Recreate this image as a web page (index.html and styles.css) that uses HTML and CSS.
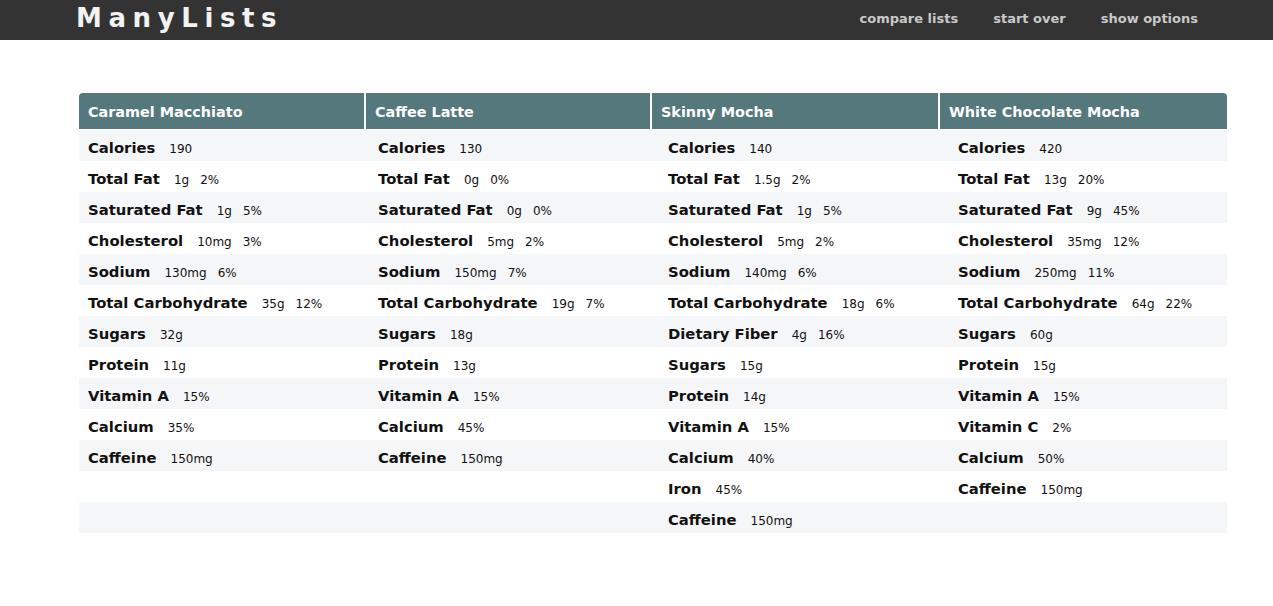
FILE: index.html
```html
<!DOCTYPE html>
<html>
<head>
<meta charset="utf-8">
<title>ManyLists</title>
<link rel="stylesheet" href="styles.css">
</head>
<body>
<header class="navbar">
  <div class="brand">ManyLists</div>
  <nav class="nav">
    <a href="#">compare lists</a>
    <a href="#">start over</a>
    <a href="#">show options</a>
  </nav>
</header>
<main class="content">
  <div class="table">
    <div class="head">
      <div class="th">Caramel Macchiato</div>
      <div class="th">Caffee Latte</div>
      <div class="th">Skinny Mocha</div>
      <div class="th">White Chocolate Mocha</div>
    </div>
    <div class="row">
      <div class="td"><b>Calories</b><span>190</span></div>
      <div class="td"><b>Calories</b><span>130</span></div>
      <div class="td"><b>Calories</b><span>140</span></div>
      <div class="td"><b>Calories</b><span>420</span></div>
    </div>
    <div class="row">
      <div class="td"><b>Total Fat</b><span>1g</span><span>2%</span></div>
      <div class="td"><b>Total Fat</b><span>0g</span><span>0%</span></div>
      <div class="td"><b>Total Fat</b><span>1.5g</span><span>2%</span></div>
      <div class="td"><b>Total Fat</b><span>13g</span><span>20%</span></div>
    </div>
    <div class="row">
      <div class="td"><b>Saturated Fat</b><span>1g</span><span>5%</span></div>
      <div class="td"><b>Saturated Fat</b><span>0g</span><span>0%</span></div>
      <div class="td"><b>Saturated Fat</b><span>1g</span><span>5%</span></div>
      <div class="td"><b>Saturated Fat</b><span>9g</span><span>45%</span></div>
    </div>
    <div class="row">
      <div class="td"><b>Cholesterol</b><span>10mg</span><span>3%</span></div>
      <div class="td"><b>Cholesterol</b><span>5mg</span><span>2%</span></div>
      <div class="td"><b>Cholesterol</b><span>5mg</span><span>2%</span></div>
      <div class="td"><b>Cholesterol</b><span>35mg</span><span>12%</span></div>
    </div>
    <div class="row">
      <div class="td"><b>Sodium</b><span>130mg</span><span>6%</span></div>
      <div class="td"><b>Sodium</b><span>150mg</span><span>7%</span></div>
      <div class="td"><b>Sodium</b><span>140mg</span><span>6%</span></div>
      <div class="td"><b>Sodium</b><span>250mg</span><span>11%</span></div>
    </div>
    <div class="row">
      <div class="td"><b>Total Carbohydrate</b><span>35g</span><span>12%</span></div>
      <div class="td"><b>Total Carbohydrate</b><span>19g</span><span>7%</span></div>
      <div class="td"><b>Total Carbohydrate</b><span>18g</span><span>6%</span></div>
      <div class="td"><b>Total Carbohydrate</b><span>64g</span><span>22%</span></div>
    </div>
    <div class="row">
      <div class="td"><b>Sugars</b><span>32g</span></div>
      <div class="td"><b>Sugars</b><span>18g</span></div>
      <div class="td"><b>Dietary Fiber</b><span>4g</span><span>16%</span></div>
      <div class="td"><b>Sugars</b><span>60g</span></div>
    </div>
    <div class="row">
      <div class="td"><b>Protein</b><span>11g</span></div>
      <div class="td"><b>Protein</b><span>13g</span></div>
      <div class="td"><b>Sugars</b><span>15g</span></div>
      <div class="td"><b>Protein</b><span>15g</span></div>
    </div>
    <div class="row">
      <div class="td"><b>Vitamin A</b><span>15%</span></div>
      <div class="td"><b>Vitamin A</b><span>15%</span></div>
      <div class="td"><b>Protein</b><span>14g</span></div>
      <div class="td"><b>Vitamin A</b><span>15%</span></div>
    </div>
    <div class="row">
      <div class="td"><b>Calcium</b><span>35%</span></div>
      <div class="td"><b>Calcium</b><span>45%</span></div>
      <div class="td"><b>Vitamin A</b><span>15%</span></div>
      <div class="td"><b>Vitamin C</b><span>2%</span></div>
    </div>
    <div class="row">
      <div class="td"><b>Caffeine</b><span>150mg</span></div>
      <div class="td"><b>Caffeine</b><span>150mg</span></div>
      <div class="td"><b>Calcium</b><span>40%</span></div>
      <div class="td"><b>Calcium</b><span>50%</span></div>
    </div>
    <div class="row">
      <div class="td"></div>
      <div class="td"></div>
      <div class="td"><b>Iron</b><span>45%</span></div>
      <div class="td"><b>Caffeine</b><span>150mg</span></div>
    </div>
    <div class="row">
      <div class="td"></div>
      <div class="td"></div>
      <div class="td"><b>Caffeine</b><span>150mg</span></div>
      <div class="td"></div>
    </div>
  </div>
</main>
</body>
</html>
```

FILE: styles.css
```css
* { box-sizing: border-box; }
html, body { margin: 0; padding: 0; background: #fff; }
body { font-family: "DejaVu Sans", "Liberation Sans", sans-serif; color: #111; }

.navbar {
  height: 40px;
  background: #333333;
  display: flex;
  align-items: center;
  justify-content: space-between;
  padding: 0 75px 0 76px;
}
.brand {
  color: #f2f2f2;
  font-size: 26px;
  font-weight: bold;
  letter-spacing: 6.6px;
  line-height: 36px;
  margin-top: -4px;
}
.nav { display: flex; gap: 35px; margin-top: -4px; }
.nav a {
  color: #c8c8c8;
  text-decoration: none;
  font-size: 13px;
  font-weight: bold;
}

.content { padding: 53px 46px 0 79px; }
.table { width: 1148px; }

.head {
  display: grid;
  grid-template-columns: 285px 284px 286px 1fr;
  gap: 2px;
  background: #fff;
  margin-bottom: 1px;
}
.th {
  background: #55787c;
  color: #fff;
  height: 36px;
  line-height: 38px;
  padding-left: 9px;
  font-size: 14.4px;
  font-weight: bold;
}
.th:first-child { border-top-left-radius: 4px; }
.th:last-child { border-top-right-radius: 4px; }

.row {
  display: grid;
  grid-template-columns: 290px 290px 290px 1fr;
  height: 31px;
  align-items: center;
  padding-top: 3px;
}
.row:nth-child(even) { background: #f5f6f8; }
.td { padding-left: 9px; white-space: nowrap; }
.td b { font-size: 14.8px; font-weight: bold; color: #111; }
.td span { font-size: 12px; margin-left: 11px; color: #111; }
.td b + span { margin-left: 14px; }
```
